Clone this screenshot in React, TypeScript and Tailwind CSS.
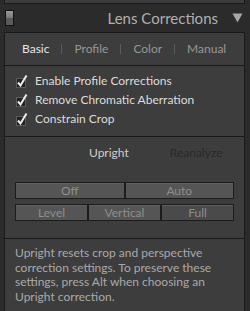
import React from "react";

const font = { fontFamily: "Lato, 'Liberation Sans', sans-serif" };

function Check({ label }: { label: string }) {
  return (
    <div className="flex items-center h-[19px]">
      <svg width="14" height="14" viewBox="0 0 14 14" className="ml-[10px] shrink-0">
        <rect x="1.5" y="4.5" width="9" height="9" fill="#222" stroke="#5c5c5c" />
        <path d="M3 8.5 L5.5 11.5 L11.5 1.5" fill="none" stroke="#ececec" strokeWidth="2" />
      </svg>
      <span className="ml-[6px] text-[12px] text-[#dcdcdc] leading-none">{label}</span>
    </div>
  );
}

function Btn({ label, dark }: { label: string; dark?: boolean }) {
  return (
    <div
      className={`flex-1 h-full flex items-center justify-center border border-[#1c1c1c] text-[12px] text-[#8e8e8e] ${
        dark ? "bg-[#4a4a4a]" : "bg-[#555555]"
      } shadow-[inset_0_1px_0_#606060]`}
    >
      {label}
    </div>
  );
}

export default function App() {
  return (
    <div className="w-[250px] h-[311px] bg-[#2b2b2b] overflow-hidden" style={font}>
      <div className="ml-[4px] w-[241px] h-[4px] bg-[#3d3d3d] border-x border-b border-[#1a1a1a]" />
      <div className="h-[28px] flex items-center relative">
        <div className="ml-[5px] w-[9px] h-[16px] border border-[#111] flex flex-col">
          <div className="flex-1 bg-gradient-to-b from-[#9a9a9a] to-[#777]" />
          <div className="flex-1 bg-[#5a5a5a]" />
        </div>
        <div className="flex-1" />
        <span className="text-[15px] text-[#b0b0b0] leading-none mr-[14px]">Lens Corrections</span>
        <svg width="11" height="10" viewBox="0 0 11 10" className="mr-[7px]">
          <path d="M0.5 0.5 L10.5 0.5 L5.5 9.5 Z" fill="#a6a6a6" />
        </svg>
      </div>
      <div className="ml-[4px] w-[241px] h-[279px] bg-[#3d3d3d] border-x border-t border-[#1a1a1a] flex flex-col">
        <div className="h-[33px] border-b border-[#1a1a1a] flex items-center pl-[17px] text-[12px] leading-none">
          <span className="text-[#e6e6e6]">Basic</span>
          <span className="mx-[12px] w-px h-[10px] bg-[#5a5a5a]" />
          <span className="text-[#979797]">Profile</span>
          <span className="mx-[12px] w-px h-[10px] bg-[#5a5a5a]" />
          <span className="text-[#979797]">Color</span>
          <span className="mx-[12px] w-px h-[10px] bg-[#5a5a5a]" />
          <span className="text-[#979797]">Manual</span>
        </div>
        <div className="h-[71px] border-b border-[#1a1a1a] pt-[5px]">
          <Check label="Enable Profile Corrections" />
          <Check label="Remove Chromatic Aberration" />
          <Check label="Constrain Crop" />
        </div>
        <div className="h-[102px] border-b border-[#1a1a1a] pt-[8px] flex flex-col">
          <div className="h-[16px] flex items-center text-[12px] leading-none pl-[84px]">
            <span className="text-[#cfcfcf]">Upright</span>
            <span className="ml-[41px] text-[#2a2a2a]">Reanalyze</span>
          </div>
          <div className="mt-[21px] ml-[10px] w-[219px] h-[17px] flex">
            <Btn label="Off" />
            <Btn label="Auto" />
          </div>
          <div className="mt-[5px] ml-[10px] w-[219px] h-[17px] flex">
            <Btn label="Level" />
            <Btn label="Vertical" />
            <Btn label="Full" dark />
          </div>
        </div>
        <div className="pt-[7px] pl-[10px] pr-[14px] text-[12px] leading-[14.5px] text-[#a9a9a9]">
          Upright resets crop and perspective correction settings. To preserve these settings, press Alt when choosing an Upright correction.
        </div>
      </div>
    </div>
  );
}
